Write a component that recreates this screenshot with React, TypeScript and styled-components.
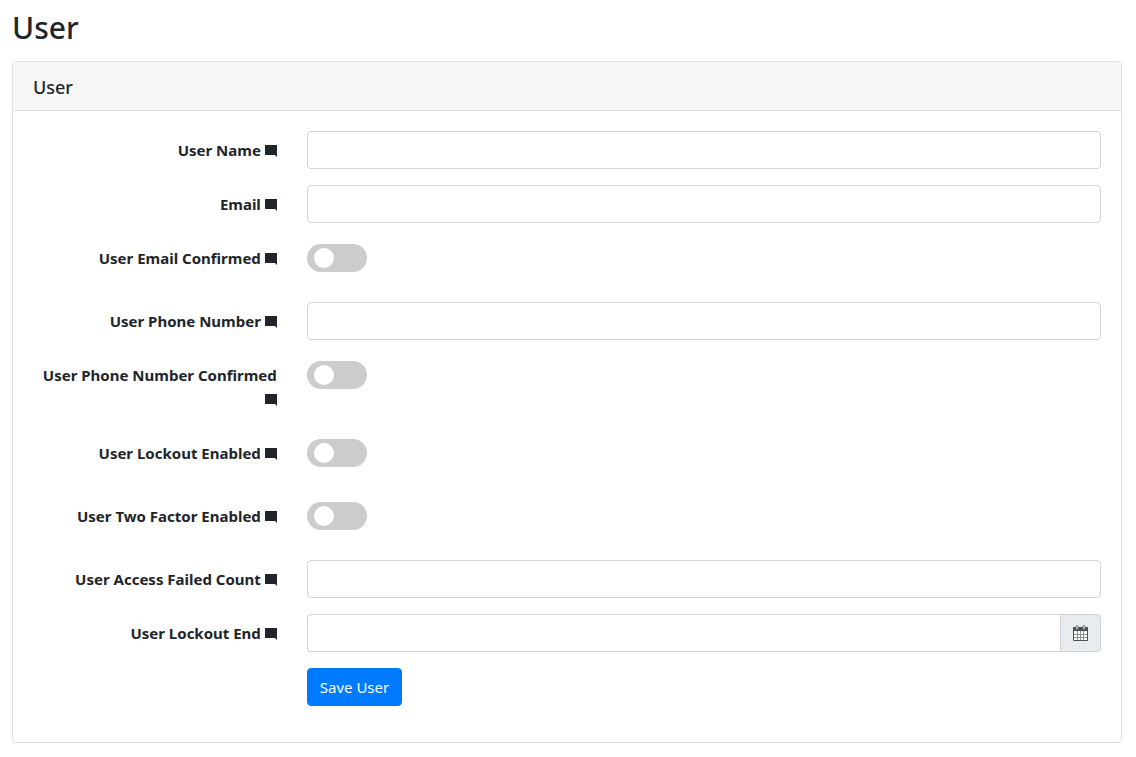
import React from "react";
import styled, { createGlobalStyle } from "styled-components";

const GlobalStyle = createGlobalStyle`
  *, *::before, *::after { box-sizing: border-box; }
  body {
    margin: 0;
    background: #fff;
    color: #212529;
    font-family: "Segoe UI", "Noto Sans", "Open Sans", sans-serif;
    font-size: 16px;
    line-height: 24px;
  }
`;

const Page = styled.main`
  padding: 8px 14px 14px 12px;
`;

const Title = styled.h1`
  margin: 0 0 13px;
  font-size: 30px;
  font-weight: 500;
  line-height: 40px;
`;

const Card = styled.section`
  border: 1px solid #dfdfdf;
  border-radius: 4px;
  overflow: hidden;
`;

const CardHeader = styled.header`
  padding: 13px 20px 11px;
  background: #f7f7f7;
  border-bottom: 1px solid #dfdfdf;
`;

const CardTitle = styled.h2`
  margin: 0;
  font-size: 18px;
  font-weight: 500;
  line-height: 24px;
`;

const Form = styled.form`
  padding: 20px;
`;

const Row = styled.div`
  display: flex;
  margin: 0 -15px 16px -16px;
`;

const LabelColumn = styled.div`
  flex: 0 0 25%;
  padding: 7px 15px;
  text-align: right;
`;

const FieldColumn = styled.div<{ $toggle?: boolean }>`
  flex: 1;
  min-width: 0;
  padding: ${(p) => (p.$toggle ? "5px 15px 14px" : "0 15px")};
`;

const Label = styled.label`
  font-size: 15px;
  font-weight: 700;
`;

const HintIcon = styled.svg`
  width: 12px;
  height: 12px;
  vertical-align: -1px;
`;

const TextInput = styled.input`
  display: block;
  flex: 1;
  width: 100%;
  min-width: 0;
  height: 38px;
  padding: 6px 12px;
  border: 1px solid #ced4da;
  border-radius: 4px;
  background: #fff;
  color: #495057;
  font: inherit;
`;

const Toggle = styled.input`
  appearance: none;
  display: block;
  width: 60px;
  height: 28px;
  margin: 0;
  padding: 4px 7px;
  border-radius: 14px;
  background: #ccc;
  cursor: pointer;

  &::before {
    content: "";
    display: block;
    width: 20px;
    height: 20px;
    border-radius: 50%;
    background: #fff;
  }

  &:checked {
    padding-left: 33px;
    background: #007bff;
  }
`;

const InputGroup = styled.div`
  display: flex;

  ${TextInput} {
    border-right: 0;
    border-radius: 4px 0 0 4px;
  }
`;

const PickerButton = styled.button`
  display: flex;
  align-items: center;
  justify-content: center;
  width: 41px;
  height: 38px;
  padding: 0;
  border: 1px solid #ced4da;
  border-radius: 0 4px 4px 0;
  background: #e9ecef;
  color: #495057;
  cursor: pointer;
`;

const SaveButton = styled.button`
  height: 38px;
  padding: 6px 12px;
  border: 1px solid #007bff;
  border-radius: 4px;
  background: #007bff;
  color: #fff;
  font: inherit;
  font-size: 15px;
  cursor: pointer;
`;

const Hint = () => (
  <HintIcon viewBox="0 0 12 12" aria-hidden="true">
    <path d="M0 0H12V12L10 10H0Z" fill="currentColor" />
  </HintIcon>
);

const CalendarIcon = () => (
  <svg width="16" height="16" viewBox="0 0 16 16" aria-hidden="true">
    <path d="M0.5 2.5H14.5V15.5H0.5Z" fill="#fff" stroke="currentColor" />
    <path d="M0 2H15V6H0Z" fill="currentColor" />
    <path d="M4.5 6V15M7.5 6V15M10.5 6V15M1 9.5H14M1 12.5H14" stroke="#8a9097" strokeWidth="1" />
    <rect x="3" y="0.5" width="2" height="4" rx="1" fill="#cfe0ec" stroke="#626a72" strokeWidth="0.8" />
    <rect x="10" y="0.5" width="2" height="4" rx="1" fill="#cfe0ec" stroke="#626a72" strokeWidth="0.8" />
  </svg>
);

type Kind = "text" | "toggle" | "date";

const fields: { id: string; label: string; kind: Kind }[] = [
  { id: "userName", label: "User Name", kind: "text" },
  { id: "email", label: "Email", kind: "text" },
  { id: "emailConfirmed", label: "User Email Confirmed", kind: "toggle" },
  { id: "phoneNumber", label: "User Phone Number", kind: "text" },
  { id: "phoneNumberConfirmed", label: "User Phone Number Confirmed", kind: "toggle" },
  { id: "lockoutEnabled", label: "User Lockout Enabled", kind: "toggle" },
  { id: "twoFactorEnabled", label: "User Two Factor Enabled", kind: "toggle" },
  { id: "accessFailedCount", label: "User Access Failed Count", kind: "text" },
  { id: "lockoutEnd", label: "User Lockout End", kind: "date" },
];

const Control = ({ id, kind }: { id: string; kind: Kind }) => {
  if (kind === "toggle") return <Toggle type="checkbox" id={id} name={id} />;
  if (kind === "date")
    return (
      <InputGroup>
        <TextInput type="text" id={id} name={id} />
        <PickerButton type="button" aria-label="Choose date">
          <CalendarIcon />
        </PickerButton>
      </InputGroup>
    );
  return <TextInput type="text" id={id} name={id} />;
};

export default function App() {
  return (
    <>
      <GlobalStyle />
      <Page>
        <Title>User</Title>
        <Card>
          <CardHeader>
            <CardTitle>User</CardTitle>
          </CardHeader>
          <Form onSubmit={(e) => e.preventDefault()}>
            {fields.map(({ id, label, kind }) => (
              <Row key={id}>
                <LabelColumn>
                  <Label htmlFor={id}>
                    {label} <Hint />
                  </Label>
                </LabelColumn>
                <FieldColumn $toggle={kind === "toggle"}>
                  <Control id={id} kind={kind} />
                </FieldColumn>
              </Row>
            ))}
            <Row>
              <LabelColumn />
              <FieldColumn>
                <SaveButton type="submit">Save User</SaveButton>
              </FieldColumn>
            </Row>
          </Form>
        </Card>
      </Page>
    </>
  );
}
